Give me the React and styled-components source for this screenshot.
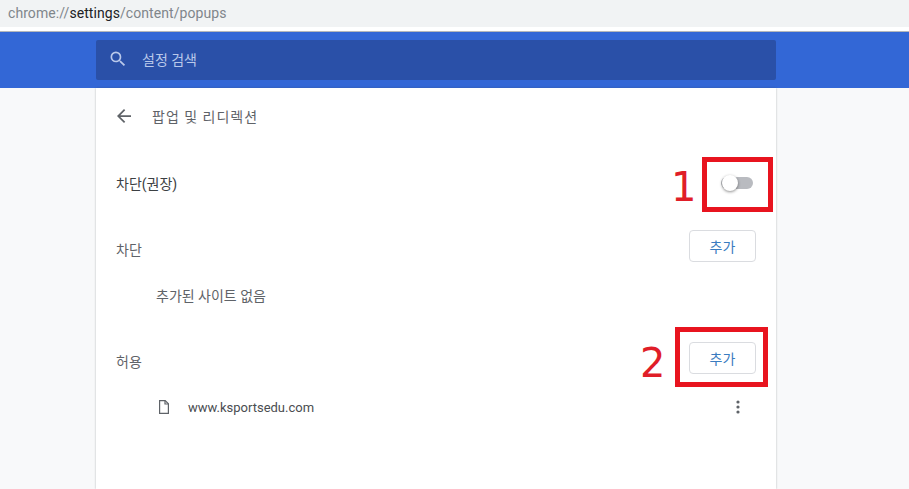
import React from "react";
import styled, { createGlobalStyle } from "styled-components";

const Global = createGlobalStyle`
  html, body {
    margin: 0;
    padding: 0;
    background: #f8f9fa;
    overflow: hidden;
  }
`;

const fontStack = `Roboto, "Noto Sans CJK KR", "Liberation Sans", sans-serif`;

const Page = styled.div`
  position: relative;
  width: 909px;
  height: 489px;
  overflow: hidden;
  font-family: ${fontStack};
  color: #5f6368;
  background: #f8f9fa;
`;

const AddressBar = styled.div`
  height: 27px;
  box-sizing: border-box;
  padding: 4px 0 0 8px;
  background: #f1f3f4;
  font-size: 14px;
  line-height: 18px;
  letter-spacing: 0.07px;
  color: #80868b;
`;

const Host = styled.span`
  color: #202124;
`;

const Gap = styled.div`
  height: 4px;
  background: #fff;
  border-bottom: 1px solid #b4b7bb;
`;

const Header = styled.div`
  height: 56px;
  box-sizing: border-box;
  padding: 8px 133px 8px 96px;
  background: #3367d6;
`;

const SearchBox = styled.div`
  display: flex;
  align-items: center;
  height: 40px;
  box-sizing: border-box;
  padding: 0 0 2px 12px;
  gap: 14px;
  background: #2a50a8;
  border-radius: 2px;
  font-size: 14px;
  color: #b9c8ea;
`;

const Card = styled.div`
  width: 680px;
  height: 401px;
  margin-left: 96px;
  background: #fff;
  box-shadow: 0 0 2px rgba(60, 64, 67, 0.35);
`;

const TitleRow = styled.div`
  display: flex;
  align-items: center;
  height: 56px;
  padding-left: 21px;
  gap: 21px;
  font-size: 14px;
  letter-spacing: 1px;
  color: #5f6368;
`;

const Row = styled.div`
  display: flex;
  align-items: center;
  justify-content: space-between;
  height: ${(p) => p.$h}px;
  padding: 0 20px;
  font-size: 14px;
  color: ${(p) => (p.$dark ? "#3c4043" : "#5f6368")};
`;

const ListLabel = styled.span`
  margin-top: 6px;
`;

const Empty = styled.div`
  height: 64px;
  padding-left: 60px;
  font-size: 14px;
  line-height: 52px;
  color: #5f6368;
`;

const SiteRow = styled.div`
  display: flex;
  align-items: center;
  height: 50px;
  padding: 0 36px 0 62px;
  font-size: 13px;
  color: #4a4d51;
`;

const SiteName = styled.span`
  flex: 1;
  margin-left: 18px;
`;

const AddButton = styled.button`
  width: 67px;
  height: 32px;
  padding: 0;
  background: #fff;
  border: 1px solid #dadce0;
  border-radius: 4px;
  font-family: ${fontStack};
  font-size: 14px;
  color: #3a7cc0;
`;

const Toggle = styled.div`
  position: relative;
  width: 32px;
  height: 12px;
  margin-right: 3px;
  border-radius: 6px;
  background: #b9bbc0;
`;

const Knob = styled.div`
  position: absolute;
  left: 1px;
  top: -2px;
  width: 16px;
  height: 16px;
  border-radius: 50%;
  background: #fff;
  box-shadow: 0 1px 3px rgba(0, 0, 0, 0.45);
`;

const Callout = styled.div`
  position: absolute;
  box-sizing: border-box;
  left: ${(p) => p.$x}px;
  top: ${(p) => p.$y}px;
  width: ${(p) => p.$w}px;
  height: ${(p) => p.$h}px;
  border: 5px solid #e8141f;
`;

const CalloutNumber = styled.div`
  position: absolute;
  left: ${(p) => p.$x}px;
  top: ${(p) => p.$y}px;
  font-family: "DejaVu Sans", sans-serif;
  font-size: 40px;
  line-height: 50px;
  color: #e01e28;
`;

const SearchIcon = () => (
  <svg width="20" height="20" viewBox="0 0 24 24" fill="currentColor">
    <path d="M15.5 14h-.79l-.28-.27A6.47 6.47 0 0 0 16 9.5 6.5 6.5 0 1 0 9.5 16c1.61 0 3.09-.59 4.23-1.57l.27.28v.79l5 4.99L20.49 19l-4.99-5zm-6 0C7.01 14 5 11.99 5 9.5S7.01 5 9.5 5 14 7.01 14 9.5 11.99 14 9.5 14z" />
  </svg>
);

const BackIcon = () => (
  <svg width="14" height="14" viewBox="0 0 16 16" fill="#5f6368">
    <path d="M16 7H3.83l5.59-5.59L8 0 0 8l8 8 1.41-1.41L3.83 9H16z" />
  </svg>
);

const FileIcon = () => (
  <svg width="12" height="14" viewBox="0 0 12 14" fill="none" stroke="#5f6368" strokeWidth="1.2">
    <path d="M1.6 .6h5.6l3.2 3.2v9.6H1.6z" />
    <path d="M7 .8v3.2h3.2" />
  </svg>
);

const MoreIcon = () => (
  <svg width="4" height="14" viewBox="0 0 4 14" fill="#5f6368">
    <circle cx="2" cy="2" r="1.6" />
    <circle cx="2" cy="7" r="1.6" />
    <circle cx="2" cy="12" r="1.6" />
  </svg>
);

export default function App() {
  return (
    <Page>
      <Global />
      <AddressBar>
        chrome://<Host>settings</Host>/content/popups
      </AddressBar>
      <Gap />
      <Header>
        <SearchBox>
          <SearchIcon />
          <span>설정 검색</span>
        </SearchBox>
      </Header>
      <Card>
        <TitleRow>
          <BackIcon />
          <span>팝업 및 리디렉션</span>
        </TitleRow>
        <Row $h={78} $dark>
          <span>차단(권장)</span>
          <Toggle>
            <Knob />
          </Toggle>
        </Row>
        <Row $h={48}>
          <ListLabel>차단</ListLabel>
          <AddButton>추가</AddButton>
        </Row>
        <Empty>추가된 사이트 없음</Empty>
        <Row $h={48}>
          <ListLabel>허용</ListLabel>
          <AddButton>추가</AddButton>
        </Row>
        <SiteRow>
          <FileIcon />
          <SiteName>www.ksportsedu.com</SiteName>
          <MoreIcon />
        </SiteRow>
      </Card>
      <Callout $x={702} $y={157} $w={71} $h={55} />
      <CalloutNumber $x={671} $y={162}>1</CalloutNumber>
      <Callout $x={675} $y={327} $w={93} $h={60} />
      <CalloutNumber $x={640} $y={338}>2</CalloutNumber>
    </Page>
  );
}
